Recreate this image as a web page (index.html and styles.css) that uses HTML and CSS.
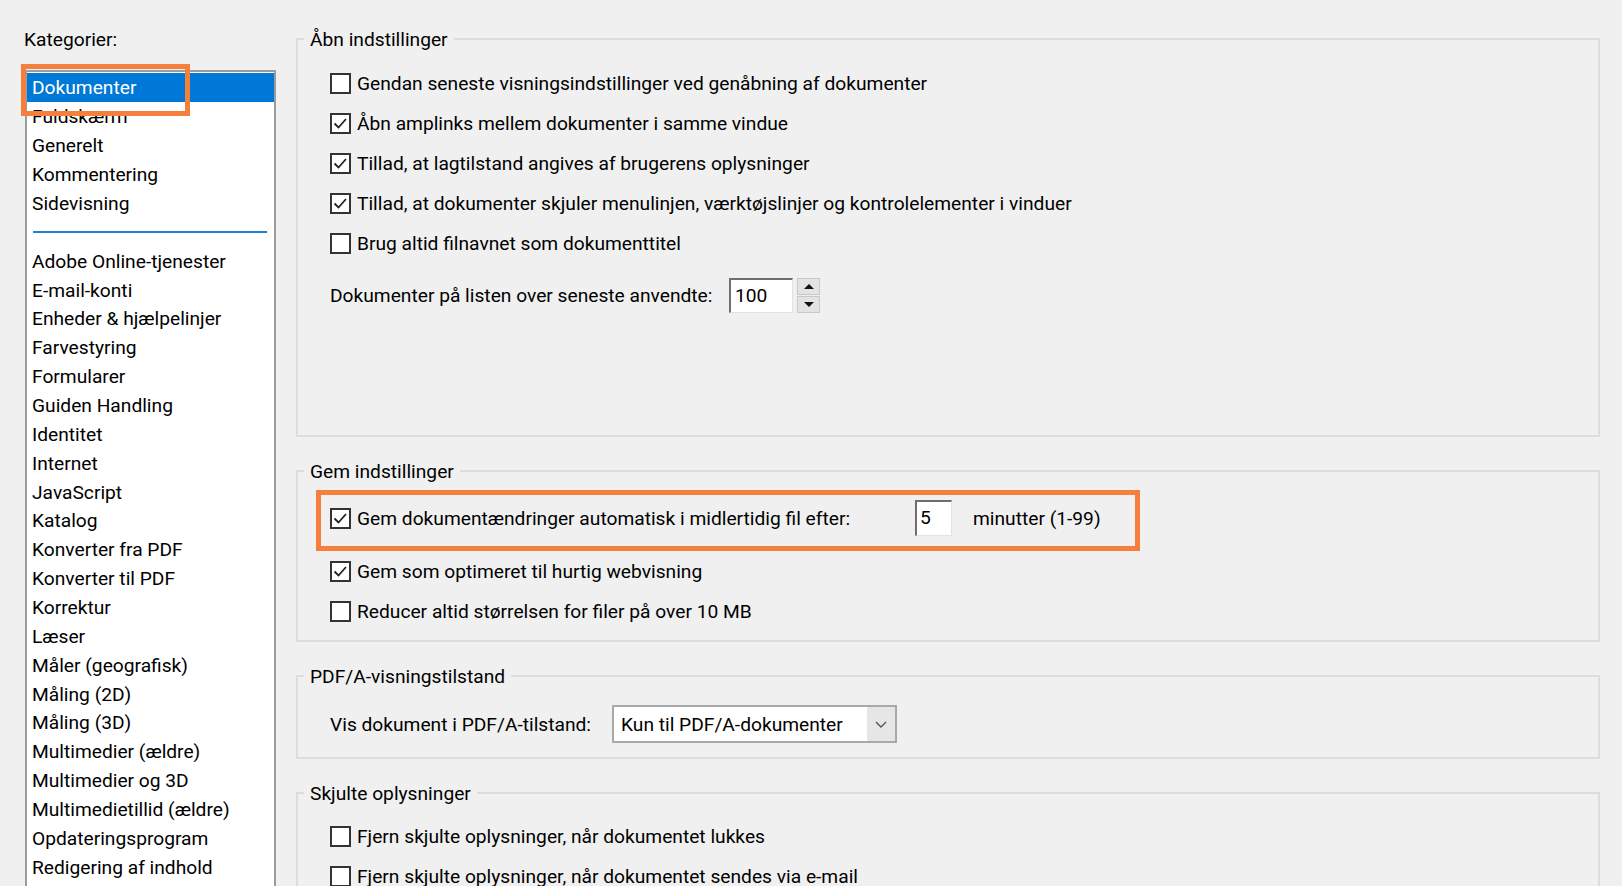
FILE: index.html
```html
<!DOCTYPE html>
<html lang="da">
<head>
<meta charset="utf-8">
<title>Indstillinger</title>
<link rel="stylesheet" href="styles.css">
</head>
<body>
<div class="dialog">
  <aside class="categories">
    <div class="cat-label">Kategorier:</div>
    <div class="listbox-wrap">
      <ul class="listbox">
        <li class="item selected">Dokumenter</li>
        <li class="item">Fuldskærm</li>
        <li class="item">Generelt</li>
        <li class="item">Kommentering</li>
        <li class="item">Sidevisning</li>
        <li class="sep"></li>
        <li class="item">Adobe Online-tjenester</li>
        <li class="item">E-mail-konti</li>
        <li class="item">Enheder &amp; hjælpelinjer</li>
        <li class="item">Farvestyring</li>
        <li class="item">Formularer</li>
        <li class="item">Guiden Handling</li>
        <li class="item">Identitet</li>
        <li class="item">Internet</li>
        <li class="item">JavaScript</li>
        <li class="item">Katalog</li>
        <li class="item">Konverter fra PDF</li>
        <li class="item">Konverter til PDF</li>
        <li class="item">Korrektur</li>
        <li class="item">Læser</li>
        <li class="item">Måler (geografisk)</li>
        <li class="item">Måling (2D)</li>
        <li class="item">Måling (3D)</li>
        <li class="item">Multimedier (ældre)</li>
        <li class="item">Multimedier og 3D</li>
        <li class="item">Multimedietillid (ældre)</li>
        <li class="item">Opdateringsprogram</li>
        <li class="item">Redigering af indhold</li>
      </ul>
      <div class="callout callout-selected"></div>
    </div>
  </aside>

  <main class="settings">
    <fieldset class="group group-open">
      <legend>Åbn indstillinger</legend>
      <div class="group-body">
        <div class="check-row"><span class="cb"></span><span>Gendan seneste visningsindstillinger ved genåbning af dokumenter</span></div>
        <div class="check-row"><span class="cb checked"><svg viewBox="0 0 17 17"><polyline points="2.5,8.5 6.5,12.5 14,4"/></svg></span><span>Åbn amplinks mellem dokumenter i samme vindue</span></div>
        <div class="check-row"><span class="cb checked"><svg viewBox="0 0 17 17"><polyline points="2.5,8.5 6.5,12.5 14,4"/></svg></span><span>Tillad, at lagtilstand angives af brugerens oplysninger</span></div>
        <div class="check-row"><span class="cb checked"><svg viewBox="0 0 17 17"><polyline points="2.5,8.5 6.5,12.5 14,4"/></svg></span><span>Tillad, at dokumenter skjuler menulinjen, værktøjslinjer og kontrolelementer i vinduer</span></div>
        <div class="check-row"><span class="cb"></span><span>Brug altid filnavnet som dokumenttitel</span></div>
        <div class="num-row">
          <span class="num-label">Dokumenter på listen over seneste anvendte:</span>
          <span class="field field-recent">100</span>
          <span class="spinner">
            <span class="spin-btn"><span class="tri tri-up"></span></span>
            <span class="spin-btn"><span class="tri tri-down"></span></span>
          </span>
        </div>
      </div>
    </fieldset>

    <fieldset class="group group-save">
      <legend>Gem indstillinger</legend>
      <div class="group-body">
        <div class="callout callout-row">
          <div class="auto-row">
            <span class="cb checked"><svg viewBox="0 0 17 17"><polyline points="2.5,8.5 6.5,12.5 14,4"/></svg></span>
            <span class="auto-label">Gem dokumentændringer automatisk i midlertidig fil efter:</span>
            <span class="field field-minutes">5</span>
            <span class="unit">minutter (1-99)</span>
          </div>
        </div>
        <div class="check-row"><span class="cb checked"><svg viewBox="0 0 17 17"><polyline points="2.5,8.5 6.5,12.5 14,4"/></svg></span><span>Gem som optimeret til hurtig webvisning</span></div>
        <div class="check-row"><span class="cb"></span><span>Reducer altid størrelsen for filer på over 10 MB</span></div>
      </div>
    </fieldset>

    <fieldset class="group group-pdfa">
      <legend>PDF/A-visningstilstand</legend>
      <div class="group-body">
        <div class="select-row">
          <span class="select-label">Vis dokument i PDF/A-tilstand:</span>
          <span class="select">
            <span class="select-value">Kun til PDF/A-dokumenter</span>
            <span class="select-arrow"><svg viewBox="0 0 12 7"><polyline points="1,1 6,6 11,1"/></svg></span>
          </span>
        </div>
      </div>
    </fieldset>

    <fieldset class="group group-hidden">
      <legend>Skjulte oplysninger</legend>
      <div class="group-body">
        <div class="check-row"><span class="cb"></span><span>Fjern skjulte oplysninger, når dokumentet lukkes</span></div>
        <div class="check-row"><span class="cb"></span><span>Fjern skjulte oplysninger, når dokumentet sendes via e-mail</span></div>
      </div>
    </fieldset>
  </main>
</div>
</body>
</html>
```
FILE: styles.css
```css
html, body {
  margin: 0;
  height: 100%;
  overflow: hidden;
  background: #f0f0f0;
}

body {
  font-family: Roboto, "Segoe UI", "Noto Sans", sans-serif;
  font-size: 19.2px;
  color: #000;
}

.dialog {
  display: flex;
  height: 886px;
}

/* Category list on the left */
.categories {
  flex: none;
  width: 296px;
  box-sizing: border-box;
  padding: 26px 0 0 24px;
}

.cat-label {
  height: 28px;
  line-height: 28px;
  margin-bottom: 16px;
}

.listbox-wrap {
  position: relative;
  margin-left: 1px;
  width: 251px;
}

.listbox {
  margin: 0;
  padding: 1px 0 0;
  list-style: none;
  background: #fff;
  border: 2px solid #9c9c9c;
  box-sizing: border-box;
  width: 251px;
  height: 840px;
  overflow: hidden;
}

/* text sits a little low in each row, as in the native list */
.item {
  box-sizing: border-box;
  height: 28.86px;
  line-height: 28.86px;
  padding-left: 5px;
  padding-top: 1.5px;
  white-space: nowrap;
}

.item.selected {
  background: #0078d7;
  color: #fff;
  line-height: 24.86px;
  padding-top: 3px;
}

.sep {
  height: 28.86px;
  display: flex;
  align-items: center;
  padding: 0 7px 0 6px;
}

.sep::before {
  content: "";
  flex: 1;
  height: 2px;
  background: #1a7fd6;
}

/* Orange highlight frames */
.callout {
  border: 5px solid #f5803e;
  box-sizing: border-box;
}

.callout-selected {
  position: absolute;
  left: -4px;
  top: -6px;
  width: 169px;
  height: 52px;
}

/* Settings pane */
.settings {
  flex: none;
  width: 1304px;
  display: flex;
  flex-direction: column;
  gap: 20px;
  padding-top: 25px;
}

.group {
  margin: 0;
  padding: 0;
  min-inline-size: 0;
  border: 2px solid #dddddd;
}

.group legend {
  margin-left: 6px;
  padding: 2px 6px 0;
  line-height: 26px;
}

.group-body {
  padding-left: 32px;
}

.group-open .group-body {
  padding-top: 10px;
  padding-bottom: 122px;
}

.group-save .group-body {
  padding-top: 5px;
  padding-bottom: 9px;
}

.group-pdfa .group-body {
  padding-top: 15px;
  padding-bottom: 14px;
}

.group-hidden .group-body {
  padding-top: 9px;
  padding-bottom: 40px;
}

.check-row {
  display: flex;
  align-items: center;
  height: 40px;
  white-space: nowrap;
}

.cb {
  flex: none;
  width: 21px;
  height: 21px;
  box-sizing: border-box;
  border: 2px solid #333;
  background: #fff;
  margin-right: 6px;
  display: flex;
}

.cb svg {
  width: 17px;
  height: 17px;
}

.cb polyline {
  fill: none;
  stroke: #222;
  stroke-width: 1.8;
}

/* Recent documents spin field */
.num-row {
  display: flex;
  align-items: center;
  height: 35px;
  margin-top: 15px;
}

.num-label {
  width: 399px;
  white-space: nowrap;
}

.field {
  box-sizing: border-box;
  background: #fff;
  border-style: solid;
  border-width: 2px 1px 1px 2px;
  border-color: #6e6e6e #e2e2e2 #e2e2e2 #6e6e6e;
}

.field-recent {
  width: 64px;
  height: 35px;
  padding-left: 4px;
  line-height: 31px;
}

.spinner {
  margin-left: 4px;
  width: 23px;
  height: 35px;
  display: flex;
  flex-direction: column;
  gap: 1px;
}

.spin-btn {
  flex: 1;
  background: #e3e3e3;
  border: 1px solid #c9c9c9;
  display: flex;
  align-items: center;
  justify-content: center;
}

.tri {
  width: 0;
  height: 0;
  border-left: 5px solid transparent;
  border-right: 5px solid transparent;
}

.tri-up {
  border-bottom: 5px solid #111;
}

.tri-down {
  border-top: 5px solid #111;
}

/* Autosave row */
.callout-row {
  margin-left: -14px;
  width: 824px;
  padding: 5px 9px 10px;
}

.auto-row {
  display: flex;
  align-items: center;
  height: 36px;
  white-space: nowrap;
}

.auto-label {
  width: 558px;
}

.field-minutes {
  width: 37px;
  height: 36px;
  padding-left: 3px;
  line-height: 31px;
}

.unit {
  margin-left: 21px;
}

/* PDF/A dropdown */
.select-row {
  display: flex;
  align-items: center;
  height: 38px;
  white-space: nowrap;
}

.select-label {
  width: 282px;
}

.select {
  width: 285px;
  height: 38px;
  box-sizing: border-box;
  border: 2px solid #a9a9a9;
  display: flex;
  background: #e6e6e6;
}

.select-value {
  flex: 1;
  background: #fff;
  padding-left: 7px;
  line-height: 35px;
}

.select-arrow {
  width: 28px;
  display: flex;
  align-items: center;
  justify-content: center;
}

.select-arrow svg {
  width: 12px;
  height: 7px;
}

.select-arrow polyline {
  fill: none;
  stroke: #555;
  stroke-width: 1.4;
}
```
